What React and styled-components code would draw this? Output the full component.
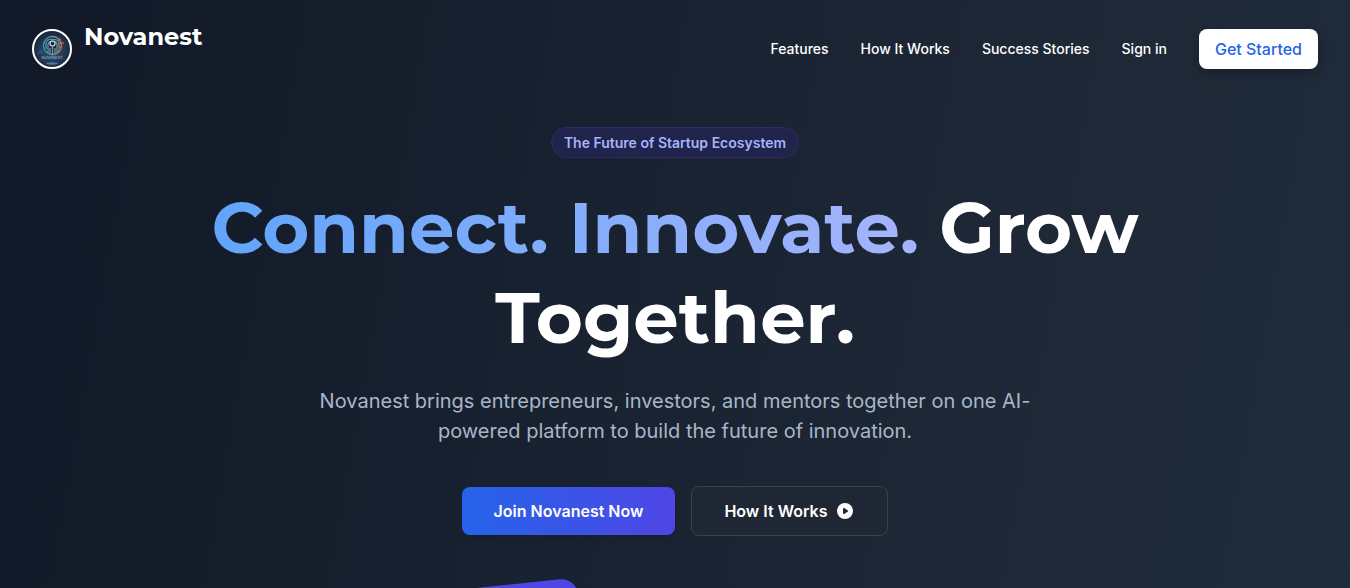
import React from "react";
import styled, { createGlobalStyle } from "styled-components";

const Global = createGlobalStyle`
  *, *::before, *::after { box-sizing: border-box; }
  body {
    margin: 0;
    background: #111827;
    color: #fff;
    font-family: Inter, "Liberation Sans", sans-serif;
    font-size: 16px;
    line-height: 24px;
  }
  a { color: inherit; text-decoration: none; }
`;

const Page = styled.div`
  min-height: 100vh;
  overflow: hidden;
  background: linear-gradient(100deg, #111827 0%, #18212f 40%, #1f2937 80%, #1f2c3d 100%);
`;

const Header = styled.header`
  display: flex;
  align-items: center;
  justify-content: space-between;
  padding: 24px 32px;
`;

const Brand = styled.a`
  display: flex;
  align-items: center;
  gap: 12px;
  min-height: 50px;
`;

const BrandName = styled.span`
  align-self: flex-start;
  font-family: Montserrat, Inter, sans-serif;
  font-size: 24px;
  line-height: 26px;
  font-weight: 700;
`;

const BrandMark = styled.svg`
  display: block;
  width: 40px;
  height: 40px;
`;

const Nav = styled.nav`
  display: flex;
  align-items: center;
  gap: 32px;
`;

const NavLink = styled.a`
  font-size: 14px;
  line-height: 20px;
  font-weight: 500;
`;

const StartButton = styled.button`
  padding: 8px 16px;
  border: 0;
  border-radius: 8px;
  background: #fff;
  color: #2563eb;
  font: inherit;
  font-weight: 500;
  box-shadow: 0 4px 12px rgba(0, 0, 0, 0.25);
`;

const Hero = styled.main`
  display: flex;
  flex-direction: column;
  align-items: center;
  padding: 29px 32px;
  text-align: center;
`;

const Pill = styled.span`
  padding: 4px 12px;
  border: 1px solid #2b2c68;
  border-radius: 16px;
  background: #20234a;
  color: #a5b4fc;
  font-size: 14px;
  line-height: 21px;
  font-weight: 600;
`;

const Title = styled.h1`
  max-width: 960px;
  margin: 24px 0;
  font-family: Montserrat, Inter, sans-serif;
  font-size: 72px;
  line-height: 90px;
  font-weight: 700;
`;

const Gradient = styled.span`
  background: linear-gradient(90deg, #60a5fa, #a5b4fc);
  background-clip: text;
  -webkit-background-clip: text;
  color: transparent;
`;

const Lead = styled.p`
  max-width: 768px;
  margin: 0 0 40px;
  color: #a9b6c9;
  font-size: 20px;
  line-height: 30px;
`;

const Actions = styled.div`
  display: flex;
  align-items: center;
  gap: 16px;
`;

const Action = styled.button`
  display: flex;
  align-items: center;
  gap: 8px;
  padding: 12px 32px;
  border: ${(p) => (p.$primary ? "0" : "1px solid #374151")};
  border-radius: 8px;
  background: ${(p) => (p.$primary ? "linear-gradient(90deg, #2563eb, #4f46e5)" : "#1f2735")};
  color: #fff;
  font: inherit;
  font-weight: 600;
  box-shadow: ${(p) => (p.$primary ? "0 4px 6px rgba(0, 0, 0, 0.1)" : "none")};
`;

const Showcase = styled.div`
  width: 100%;
  max-width: 440px;
  margin-top: 48px;
`;

const Tile = styled.div`
  width: 128px;
  height: 128px;
  border-radius: 16px;
  background: #4f46e5;
  transform: rotate(-6deg);
`;

function Logo() {
  return (
    <BrandMark viewBox="0 0 40 40" aria-hidden="true">
      <defs>
        <radialGradient id="disc" cx="50%" cy="55%" r="55%">
          <stop offset="0" stopColor="#345675" />
          <stop offset="0.6" stopColor="#223a55" />
          <stop offset="1" stopColor="#172236" />
        </radialGradient>
        <linearGradient id="ring" x1="0" x2="1">
          <stop offset="0" stopColor="#3c91b5" />
          <stop offset="0.6" stopColor="#719eaa" />
          <stop offset="1" stopColor="#d0713c" />
        </linearGradient>
      </defs>
      <circle cx="20" cy="20" r="19" fill="url(#disc)" stroke="#fff" strokeWidth="2" />
      <circle cx="20.5" cy="16.5" r="9" fill="#142c42" stroke="url(#ring)" strokeWidth="1.4" />
      <path d="M14 20v-6c1-5 12-5 13 0v6M16 23v-8c2-4 8-4 9 0v8M18 24v-5M23 24v-5M20.5 25v-7" fill="none" stroke="#64a1b7" strokeWidth="1.2" />
      <circle cx="20.5" cy="14.5" r="2.5" fill="none" stroke="#d4dce0" strokeWidth="1.2" />
      <path d="M26 11l3-1M27 14h5M27 18h3M26 21l2 1M20.5 17v5" stroke="#d8733c" strokeWidth="1.2" />
      <path d="M7 22h4M5 24h6" stroke="#2d6b92" strokeWidth="0.8" />
      <text x="20" y="30" textAnchor="middle" fill="#a9bccb" fontFamily="Inter, sans-serif" fontSize="4">NOVANEST</text>
      <ellipse cx="20" cy="34.5" rx="6" ry="1.2" fill="#497ca6" />
    </BrandMark>
  );
}

function PlayIcon() {
  return (
    <svg width="20" height="20" viewBox="0 0 20 20" fill="#fff" aria-hidden="true">
      <path fillRule="evenodd" d="M10 18a8 8 0 100-16 8 8 0 000 16zM9.555 7.168A1 1 0 008 8v4a1 1 0 001.555.832l3-2a1 1 0 000-1.664l-3-2z" />
    </svg>
  );
}

export default function App() {
  return (
    <Page>
      <Global />
      <Header>
        <Brand href="#">
          <Logo />
          <BrandName>Novanest</BrandName>
        </Brand>
        <Nav>
          <NavLink href="#features">Features</NavLink>
          <NavLink href="#how">How It Works</NavLink>
          <NavLink href="#stories">Success Stories</NavLink>
          <NavLink href="#signin">Sign in</NavLink>
          <StartButton type="button">Get Started</StartButton>
        </Nav>
      </Header>
      <Hero>
        <Pill>The Future of Startup Ecosystem</Pill>
        <Title>
          <Gradient>Connect. Innovate.</Gradient> Grow Together.
        </Title>
        <Lead>
          Novanest brings entrepreneurs, investors, and mentors together on one AI-powered platform to build the future of innovation.
        </Lead>
        <Actions>
          <Action type="button" $primary>Join Novanest Now</Action>
          <Action type="button">
            How It Works
            <PlayIcon />
          </Action>
        </Actions>
        <Showcase>
          <Tile />
        </Showcase>
      </Hero>
    </Page>
  );
}
